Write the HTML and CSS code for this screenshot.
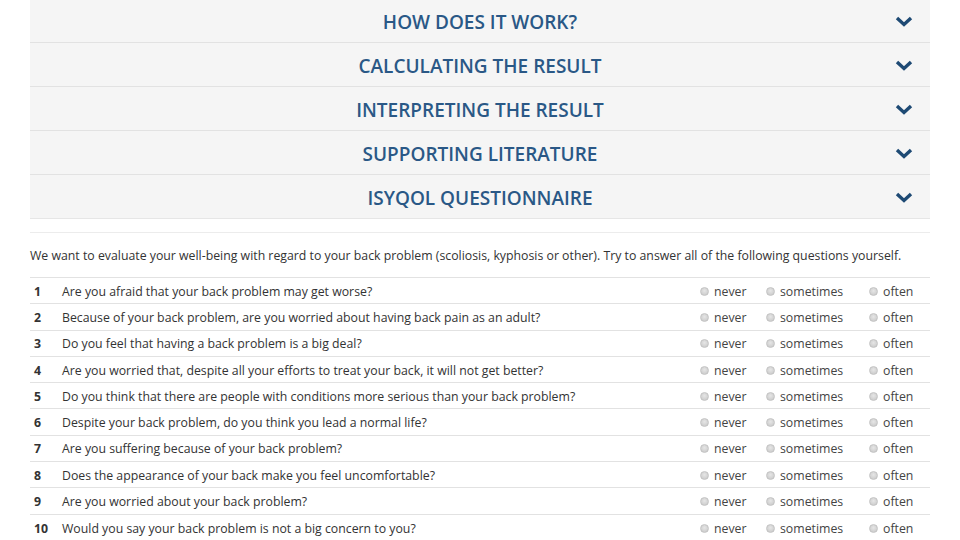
FILE: index.html
```html
<!DOCTYPE html>
<html lang="en">
<head>
    <meta charset="UTF-8">
    <meta name="viewport" content="width=device-width, initial-scale=1.0">
    <title>ISYQOL Questionnaire</title>
    <link rel="stylesheet" href="styles.css">
</head>
<body>

<div class="page">
    <div class="accordion">
        <div class="panel-heading">
            <span class="panel-title">How does it work?</span>
            <svg class="chevron" viewBox="0 0 18 11"><path d="M2 2 L9 8.5 L16 2" /></svg>
        </div>
        <div class="panel-heading">
            <span class="panel-title">Calculating the result</span>
            <svg class="chevron" viewBox="0 0 18 11"><path d="M2 2 L9 8.5 L16 2" /></svg>
        </div>
        <div class="panel-heading">
            <span class="panel-title">Interpreting the result</span>
            <svg class="chevron" viewBox="0 0 18 11"><path d="M2 2 L9 8.5 L16 2" /></svg>
        </div>
        <div class="panel-heading">
            <span class="panel-title">Supporting literature</span>
            <svg class="chevron" viewBox="0 0 18 11"><path d="M2 2 L9 8.5 L16 2" /></svg>
        </div>
        <div class="panel-heading">
            <span class="panel-title">ISYQOL Questionnaire</span>
            <svg class="chevron" viewBox="0 0 18 11"><path d="M2 2 L9 8.5 L16 2" /></svg>
        </div>
    </div>

    <div class="questionnaire">
        <p class="intro">We want to evaluate your well-being with regard to your back problem (scoliosis, kyphosis or other). Try to answer all of the following questions yourself.</p>

        <div class="questions" id="questions"></div>
    </div>
</div>

<script>
    var questions = [
        "Are you afraid that your back problem may get worse?",
        "Because of your back problem, are you worried about having back pain as an adult?",
        "Do you feel that having a back problem is a big deal?",
        "Are you worried that, despite all your efforts to treat your back, it will not get better?",
        "Do you think that there are people with conditions more serious than your back problem?",
        "Despite your back problem, do you think you lead a normal life?",
        "Are you suffering because of your back problem?",
        "Does the appearance of your back make you feel uncomfortable?",
        "Are you worried about your back problem?",
        "Would you say your back problem is not a big concern to you?"
    ];
    var answers = ["never", "sometimes", "often"];

    var list = document.getElementById('questions');
    questions.forEach(function (text, i) {
        var row = document.createElement('div');
        row.className = 'question-row';
        var html = '<span class="q-num">' + (i + 1) + '</span>' +
                   '<span class="q-text">' + text + '</span>';
        answers.forEach(function (a) {
            html += '<label class="q-option"><span class="radio"></span>' + a + '</label>';
        });
        row.innerHTML = html;
        list.appendChild(row);
    });
</script>

</body>
</html>
```

FILE: styles.css
```css
body {
    margin: 0;
    font-family: 'Open Sans', sans-serif;
    background-color: #ffffff;
    color: #333333;
}

.page {
    width: 900px;
    margin: -1px auto 0;
}

.accordion {
    border-bottom: 1px solid #e6e6e6;
}

.panel-heading {
    position: relative;
    height: 43px;
    display: flex;
    align-items: center;
    justify-content: center;
    background-color: #f5f5f5;
    border-bottom: 1px solid #e2e2e2;
}

.panel-heading:last-child {
    border-bottom: none;
}

.panel-title {
    padding-top: 2px;
    font-size: 19px;
    font-weight: 600;
    text-transform: uppercase;
    color: #2a5886;
}

.chevron {
    position: absolute;
    right: 17px;
    top: 17px;
    width: 18px;
    height: 11px;
    fill: none;
    stroke: #1e4a74;
    stroke-width: 3.4;
}

.questionnaire {
    margin-top: 13px;
    border-top: 1px solid #ececec;
}

.intro {
    margin: 0;
    padding: 14px 0 12px;
    font-size: 12.3px;
    line-height: 18px;
    border-bottom: 1px solid #e2e2e2;
}

.question-row {
    display: grid;
    grid-template-columns: 32px 1fr 66px 103px 61px;
    align-items: center;
    height: 25.3px;
    padding-top: 1px;
    box-sizing: border-box;
    min-height: 26.3px;
    border-bottom: 1px solid #e2e2e2;
    font-size: 12.3px;
}

.question-row:last-child {
    border-bottom: none;
}

.q-num {
    padding-left: 4px;
    font-weight: 700;
    color: #333333;
}

.q-text {
    white-space: nowrap;
}

.q-option {
    display: flex;
    align-items: center;
    gap: 5px;
    color: #444444;
}

.radio {
    width: 9px;
    height: 9px;
    border-radius: 50%;
    border: 1px solid #c4c4c4;
    background: radial-gradient(circle at 50% 40%, #e6e6e6 0%, #cfcfcf 70%, #bdbdbd 100%);
    box-sizing: border-box;
}
```
